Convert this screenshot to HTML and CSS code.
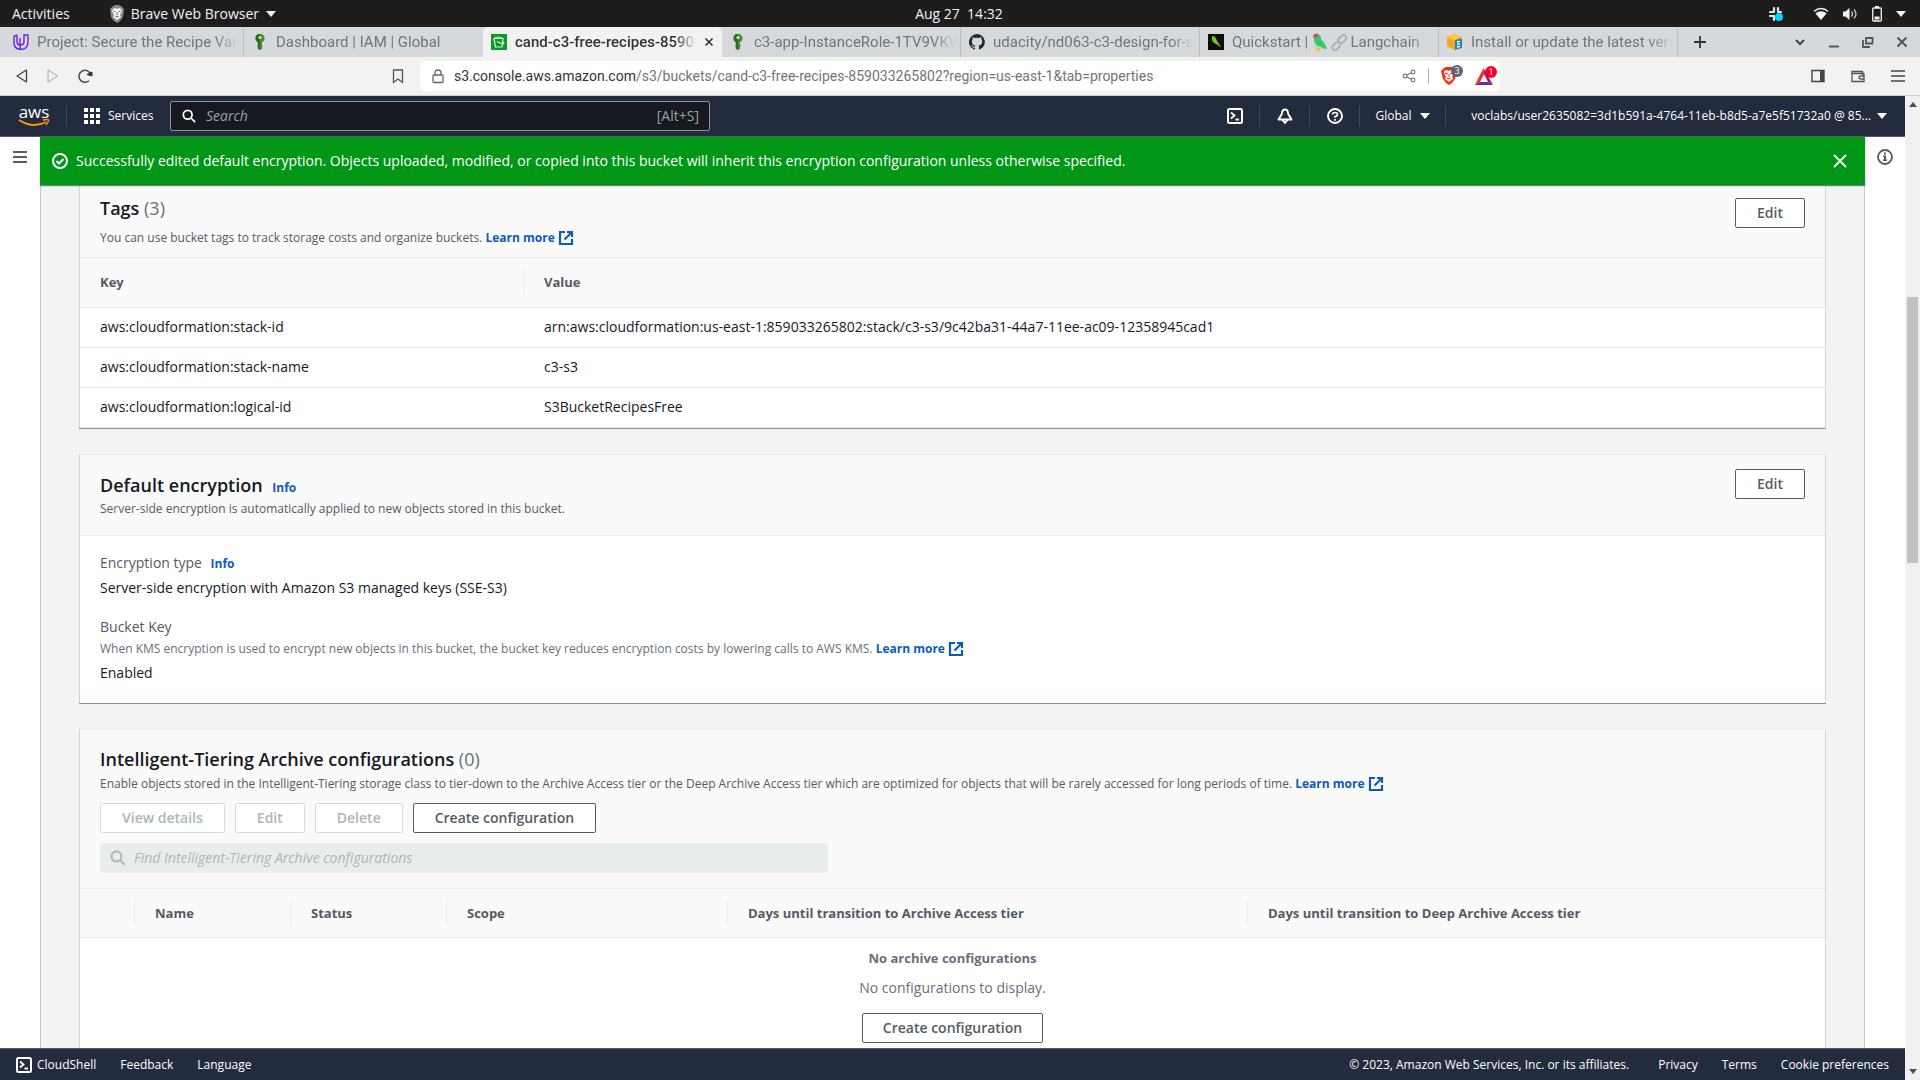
FILE: index.html
```html
<!DOCTYPE html>
<html lang="en">
<head>
<meta charset="utf-8">
<title>cand-c3-free-recipes-859033265802 - S3 bucket</title>
<link rel="stylesheet" href="styles.css">
</head>
<body>
<svg class="defs" aria-hidden="true">
  <symbol id="ext" viewBox="0 0 16 16"><path d="M7 2H2v12h12V9M9 2h5v5M14 2 6.500 9.500" fill="none" stroke="currentColor" stroke-width="2.200"/></symbol>
  <symbol id="search" viewBox="0 0 16 16"><circle cx="6.500" cy="6.500" r="5" fill="none" stroke="currentColor" stroke-width="2"/><path d="m10 10 5 5" stroke="currentColor" stroke-width="2"/></symbol>
  <symbol id="shell" viewBox="0 0 16 16"><rect x="1" y="1" width="14" height="14" rx="1.500" fill="none" stroke="currentColor" stroke-width="2"/><path d="m4 4.500 3.500 3L4 10.500M8.500 11.500H12" fill="none" stroke="currentColor" stroke-width="1.800"/></symbol>
  <symbol id="key" viewBox="0 0 16 16"><path d="M8 0C4.800 0 3.500 2 3.500 4.300c0 2 1 3.200 2.300 3.700v6.500L8 16l2-1.500V13l1-1-1-1V8c1.500-.5 2.600-1.700 2.600-3.700C12.600 2 11 0 8 0z" fill="#4b8a35"/><path d="M8 0C4.800 0 3.500 2 3.500 4.300c0 2 1 3.200 2.300 3.700v6.500L8 16z" fill="#2f6a22"/><circle cx="8" cy="3.500" r="1.500" fill="#d5e8cf"/></symbol>
</svg>

<header class="sysbar">
  <div class="sys-left"><span>Activities</span>
    <span class="sys-app"><svg width="14" height="18" viewBox="0 0 14 18"><path d="m3 1 2-1h4l2 1 3 3-1 8-3 4-3 2-3-2-3-4L0 4z" fill="#8a8a8a"/><path d="m3 4 2-1 2 1 2-1 2 1 1 2-2 4 1 2-4 3-4-3 1-2-2-4z" fill="#f4f4f4"/><path d="m3.500 6 2 .8M10.500 6l-2 .8M7 7v3m-2 1 2 1 2-1" stroke="#666" fill="none"/></svg>Brave Web Browser<i class="caret"></i></span>
  </div>
  <div>Aug 27&nbsp; 14:32</div>
  <div class="sys-right">
    <svg class="slack" width="16" height="16" viewBox="0 0 16 16"><path d="M6 2v3M2 6h4M10 2v4M10 6h3M2 10h3M6 10v4" stroke="#e5e5e5" stroke-width="2.200" stroke-linecap="round"/><circle cx="11" cy="11" r="4" fill="#00d1ff"/></svg>
    <svg width="16" height="14" viewBox="0 0 16 14"><path d="M1 4.500c4-4 10-4 14 0" stroke="#eee" fill="none" stroke-width="1.300"/><path d="M2.500 6.500c3.500-3 7.500-3 11 0L8 13z" fill="#f2f2f2"/></svg>
    <svg width="16" height="14" viewBox="0 0 16 14"><path d="M1 4.500h2.500L7.500 1v12l-4-3.500H1z" fill="#f2f2f2"/><path d="M9.500 4.500q2 2.500 0 5M12 2.500q4 4.500 0 9" stroke="#ccc" fill="none" stroke-width="1.300"/></svg>
    <svg width="12" height="16" viewBox="0 0 12 16"><path d="M4 0h4v2H4z" fill="#f2f2f2"/><rect x="1.700" y="2" width="8.600" height="13" rx="1" fill="none" stroke="#f2f2f2" stroke-width="1.300"/><path d="M3.500 10.500h5v3h-5z" fill="#f2f2f2"/></svg>
    <i class="caret"></i>
  </div>
</header>

<nav class="tabs" aria-label="Browser tabs">
  <a class="tab" href="#"><svg width="16" height="16" viewBox="0 0 16 16"><path d="M4 1v6.500q0 3.500 3.500 3.500T11 7.500V1l4-0v7q0 7-7 7.500Q1 15 1 9V2.500L4 1M7 4v11" fill="none" stroke="#6a1ff0" stroke-width="1.400"/></svg><span>Project: Secure the Recipe Vault</span></a>
  <a class="tab plain" href="#"><svg width="16" height="16"><use href="#key"/></svg><span>Dashboard | IAM | Global</span></a>
  <a class="tab active" href="#"><svg width="16" height="16" viewBox="0 0 16 16"><path fill="#0b9a2a" d="M0 0h16v16H0z"/><path d="M3 4.500h9l-1 8.500H4.500zM3 4.500Q7 1.500 12 4.500M6 7.500l6 2.500q2-.5 0-2" fill="none" stroke="#d8f5dc" stroke-width="1.200"/></svg><span>cand-c3-free-recipes-8590332</span><button class="x" type="button" aria-label="Close tab"><svg width="10" height="10" viewBox="0 0 10 10"><path d="m1.500 1.500 7 7m0-7-7 7" stroke="#333" stroke-width="1.600"/></svg></button></a>
  <a class="tab" href="#"><svg width="16" height="16"><use href="#key"/></svg><span>c3-app-InstanceRole-1TV9VKWX</span></a>
  <a class="tab" href="#"><svg width="16" height="16" viewBox="0 0 16 16"><path fill="#24292f" d="M8 0a8 8 0 0 0-2.500 15.600c.4.100.5-.2.500-.4v-1.500c-2.200.5-2.700-1-2.700-1-.4-.9-.9-1.200-.9-1.200-.7-.5.100-.5.100-.5.800.1 1.200.8 1.200.8.700 1.300 1.900.9 2.300.7.100-.5.300-.9.500-1.100-1.800-.2-3.600-.9-3.600-4 0-.9.300-1.600.8-2.100-.1-.2-.4-1 .1-2.100 0 0 .7-.2 2.200.8a7.500 7.500 0 0 1 4 0c1.500-1 2.200-.8 2.200-.8.400 1.100.2 1.900.1 2.100.5.600.8 1.300.8 2.100 0 3.100-1.900 3.800-3.700 4 .3.300.6.800.6 1.500v2.200c0 .2.100.5.600.4A8 8 0 0 0 8 0"/></svg><span>udacity/nd063-c3-design-for-se</span></a>
  <a class="tab" href="#"><svg width="16" height="16" viewBox="0 0 16 16"><path fill="#0a0f08" d="M0 0h16v16H0z"/><path d="M4 2q4 0 5 5l4 6-5-3Q3 8 4 2" fill="#76c82d"/><path d="m9 8 4 5-2-1z" fill="#e5592b"/></svg><span>Quickstart | <svg class="emoji" width="15" height="18" viewBox="0 0 15 18"><path d="M1 4q1-4 5-3 3 1 3 5 4 4 6 10-4 0-6-2-7-1-7-8z" fill="#35c96c"/><path d="M1 4Q2 0 6 1l-1 4z" fill="#ee4055"/><path d="m3 14 5 1v3H5z" fill="#f6c12b"/></svg> <svg class="emoji" width="16" height="18" viewBox="0 0 16 18"><g fill="none" stroke="#aab0b4" stroke-width="1.800"><rect x="-4.500" y="-2.500" width="9" height="5.500" rx="2.700" transform="translate(5 13) rotate(-45)"/><rect x="-4.500" y="-2.500" width="9" height="5.500" rx="2.700" transform="translate(11 6) rotate(-45)"/></g></svg> Langchain</span></a>
  <a class="tab" href="#"><svg width="16" height="16" viewBox="0 0 16 16"><path d="m0 3 7-3 8 3v9l-8 4-7-4z" fill="#f0a91c"/><path d="m0 3 7-3 8 3-8 3z" fill="#ffc83d"/><path d="m8 6 7-1.500V14l-7 2z" fill="#2586bd"/><path d="m10 8 3-.6M10 10.500l3-.6M10 13l3-.6" stroke="#fff" stroke-width="1.300"/></svg><span>Install or update the latest version</span></a>
  <button class="newtab" type="button" aria-label="New tab"><svg width="14" height="14" viewBox="0 0 14 14"><path d="M7 1v12M1 7h12" stroke="#333" stroke-width="1.800"/></svg></button>
  <div class="wincontrols">
    <button type="button" aria-label="Search tabs"><svg width="12" height="12" viewBox="0 0 12 12"><path d="m2 4 4 4 4-4" fill="none" stroke="#444" stroke-width="2"/></svg></button>
    <button type="button" aria-label="Minimize"><svg width="12" height="12" viewBox="0 0 12 12"><path d="M1 10.500h10" stroke="#555" stroke-width="2"/></svg></button>
    <button type="button" aria-label="Restore"><svg width="12" height="12" viewBox="0 0 12 12"><path d="M4 2h6.500v5.500H4zM1 4v7h7" fill="none" stroke="#555" stroke-width="1.800"/></svg></button>
    <button type="button" aria-label="Close window"><svg width="12" height="12" viewBox="0 0 12 12"><path d="m1.500 1.500 9 9m0-9-9 9" stroke="#555" stroke-width="2"/></svg></button>
  </div>
</nav>

<div class="toolbar">
  <div class="nav-left">
    <button type="button" aria-label="Back"><svg width="14" height="16" viewBox="0 0 14 16"><path d="M11.500 2v12L2 8z" fill="none" stroke="#444" stroke-width="1.300" stroke-linejoin="round"/></svg></button>
    <button type="button" aria-label="Forward"><svg width="14" height="16" viewBox="0 0 14 16"><path d="M2 2v12l9.500-6z" fill="none" stroke="#bbb" stroke-width="1.300" stroke-linejoin="round"/></svg></button>
    <button type="button" aria-label="Reload"><svg width="16" height="16" viewBox="0 0 16 16"><path d="M12 12.700A6 6 0 1 1 13.500 6" fill="none" stroke="#444" stroke-width="1.400"/><path d="M10 6.500 15 4v4z" fill="#333" stroke="#333"/></svg></button>
  </div>
  <button type="button" aria-label="Bookmark" class="bookmark"><svg width="12" height="15" viewBox="0 0 12 15"><path d="M1.500 1h9v12.500L6 10l-4.500 3.500z" fill="none" stroke="#555" stroke-width="1.300"/></svg></button>
  <div class="urlbox">
    <svg width="12" height="15" viewBox="0 0 12 15"><rect x="1" y="6" width="10" height="7.500" rx="1" fill="none" stroke="#666" stroke-width="1.300"/><path d="M3 6V4q0-3 3-3t3 3v2" fill="none" stroke="#666" stroke-width="1.300"/></svg>
    <div class="url"><b>s3.console.aws.amazon.com</b>/s3/buckets/cand-c3-free-recipes-859033265802?region=us-east-1&amp;tab=properties</div>
    <svg width="14" height="14" viewBox="0 0 14 14"><g fill="none" stroke="#777" stroke-width="1.100"><circle cx="3" cy="7" r="1.900"/><circle cx="11" cy="3" r="1.900"/><circle cx="11" cy="11" r="1.900"/><path d="m4.700 6.200 4.600-2.400m-4.600 4 4.600 2.400"/></g></svg>
    <i class="vsep"></i>
    <span class="badged"><svg width="16" height="18" viewBox="0 0 16 18"><path d="m3 1 2-1h6l2 1 3 3-2 8-3 4-3 2-3-2-3-4L0 4z" fill="#fb2a10"/><path d="m3 4 3-1 2 1 2-1 3 1 0 2-2 4 1 2-4 3-4-3 1-2-2-4z" fill="#fff"/><path d="m4 6 3 1M12 6 9 7M8 7v3m-2 1 2 1 2-1" stroke="#fb2a10" fill="none"/></svg><em>3</em></span>
    <span class="badged red"><svg width="18" height="17" viewBox="0 0 18 17"><path d="M8.500 0 0 17l5-3 4-8z" fill="#ff2a1a"/><path d="m0 17 5-3h8l5 3z" fill="#662d91"/><path d="m8.500 0 9.500 17-5-3-4-8z" fill="#a0108c"/></svg><em>1</em></span>
  </div>
  <div class="nav-right">
    <button type="button" aria-label="Sidebar"><svg width="14" height="14" viewBox="0 0 14 14"><path d="M1 1.500h12v11H1z" fill="none" stroke="#444" stroke-width="1.400"/><path d="M9 1h4v12H9z" fill="#444"/></svg></button>
    <button type="button" aria-label="Wallet"><svg width="14" height="14" viewBox="0 0 14 14"><path d="M1 2.500h10.500V5h1.500v7.500H1zM1 4.500h12M13 7H9.500Q8 7 8 8.500T9.500 10H13" fill="none" stroke="#555" stroke-width="1.300"/></svg></button>
    <button type="button" aria-label="Menu"><svg width="14" height="14" viewBox="0 0 14 14"><path d="M0 2h14M0 7h14M0 12h14" stroke="#444" stroke-width="1.300"/></svg></button>
  </div>
</div>

<div class="viewport">
<div class="page">
  <header class="aws">
    <a class="logo" href="#" aria-label="AWS"><span>aws</span><svg width="32" height="9" viewBox="0 0 32 9"><path d="M1 1q14 9 27 2" fill="none" stroke="#f90" stroke-width="1.900"/><path d="M25 1q5-1 5.500 0T28 6" fill="none" stroke="#f90" stroke-width="1.500"/></svg></a>
    <i class="hsep"></i>
    <button class="services" type="button"><svg width="16" height="16" viewBox="0 0 16 16" fill="#fff"><path d="M0 0h4v4H0zM6 0h4v4H6zM12 0h4v4h-4zM0 6h4v4H0zM6 6h4v4H6zM12 6h4v4h-4zM0 12h4v4H0zM6 12h4v4H6zM12 12h4v4h-4z"/></svg>Services</button>
    <label class="search"><svg width="14" height="14"><use href="#search"/></svg><input type="text" placeholder="Search" aria-label="Search"><span>[Alt+S]</span></label>
    <div class="aws-right">
      <button class="ic" type="button" aria-label="CloudShell"><svg width="16" height="16"><use href="#shell"/></svg></button>
      <button class="ic" type="button" aria-label="Notifications"><svg width="16" height="16" viewBox="0 0 16 16"><path d="M8 1.500c-2 0-3 2-3.200 4.500L1.500 11.500h13L11.200 6C11 3.500 10 1.500 8 1.500zM5.500 12l2.500 3 2.500-3" fill="none" stroke="#fff" stroke-width="1.900" stroke-linejoin="round"/></svg></button>
      <button class="ic" type="button" aria-label="Help"><svg width="16" height="16" viewBox="0 0 16 16"><circle cx="8" cy="8" r="7" fill="none" stroke="#fff" stroke-width="1.900"/><path d="M5.500 6.500Q5.500 4.500 8 4.500t2.500 2Q10.500 8 8 8.500v1.300M8 11v1.700" fill="none" stroke="#fff" stroke-width="1.700"/></svg></button>
      <button class="region" type="button">Global<i class="caret"></i></button>
      <button class="user" type="button">voclabs/user2635082=3d1b591a-4764-11eb-b8d5-a7e5f51732a0 @ 85...<i class="caret"></i></button>
    </div>
  </header>

  <div class="body">
    <aside class="rail"><button type="button" aria-label="Open navigation"><svg width="14" height="14" viewBox="0 0 14 14"><path d="M0 2h14M0 7h14M0 12h14" stroke="#545b64" stroke-width="2"/></svg></button></aside>
    <main>
      <div class="flash" role="status">
        <svg width="16" height="16" viewBox="0 0 16 16"><circle cx="8" cy="8" r="7" fill="none" stroke="#fff" stroke-width="2"/><path d="m4.500 8 2.500 2.500L11.500 6" fill="none" stroke="#fff" stroke-width="2"/></svg>
        <p>Successfully edited default encryption. Objects uploaded, modified, or copied into this bucket will inherit this encryption configuration unless otherwise specified.</p>
        <button type="button" aria-label="Dismiss"><svg width="14" height="14" viewBox="0 0 14 14"><path d="m1 1 12 12M13 1 1 13" stroke="#e8f5e9" stroke-width="2"/></svg></button>
      </div>

      <div class="cards">
      <section class="card first">
        <div class="card-head tags-head">
          <div><h2>Tags <span>(3)</span></h2>
          <p class="small">You can use bucket tags to track storage costs and organize buckets. <a href="#">Learn more <svg width="16" height="16"><use href="#ext"/></svg></a></p></div>
          <button class="btn" type="button">Edit</button>
        </div>
        <table class="tags">
          <thead><tr><th class="key"><div>Key</div></th><th><div>Value</div></th></tr></thead>
          <tbody>
            <tr><td>aws:cloudformation:stack-id</td><td>arn:aws:cloudformation:us-east-1:859033265802:stack/c3-s3/9c42ba31-44a7-11ee-ac09-12358945cad1</td></tr>
            <tr><td>aws:cloudformation:stack-name</td><td>c3-s3</td></tr>
            <tr><td>aws:cloudformation:logical-id</td><td>S3BucketRecipesFree</td></tr>
          </tbody>
        </table>
      </section>

      <section class="card">
        <div class="card-head enc-head">
          <div><h2>Default encryption <a class="info" href="#">Info</a></h2>
          <p class="small">Server-side encryption is automatically applied to new objects stored in this bucket.</p></div>
          <button class="btn" type="button">Edit</button>
        </div>
        <dl class="enc">
          <div><dt>Encryption type <a class="info" href="#">Info</a></dt><dd>Server-side encryption with Amazon S3 managed keys (SSE-S3)</dd></div>
          <div><dt>Bucket Key</dt><dd class="small hint">When KMS encryption is used to encrypt new objects in this bucket, the bucket key reduces encryption costs by lowering calls to AWS KMS. <a href="#">Learn more <svg width="16" height="16"><use href="#ext"/></svg></a></dd><dd>Enabled</dd></div>
        </dl>
      </section>

      <section class="card">
        <div class="card-head tier-head">
          <h2>Intelligent-Tiering Archive configurations <span>(0)</span></h2>
          <p class="small">Enable objects stored in the Intelligent-Tiering storage class to tier-down to the Archive Access tier or the Deep Archive Access tier which are optimized for objects that will be rarely accessed for long periods of time. <a href="#">Learn more <svg width="16" height="16"><use href="#ext"/></svg></a></p>
          <div class="actions">
            <button class="btn" type="button" disabled>View details</button>
            <button class="btn" type="button" disabled>Edit</button>
            <button class="btn" type="button" disabled>Delete</button>
            <button class="btn" type="button">Create configuration</button>
          </div>
          <label class="find"><svg width="16" height="16"><use href="#search"/></svg><input type="text" disabled placeholder="Find Intelligent-Tiering Archive configurations" aria-label="Find Intelligent-Tiering Archive configurations"></label>
        </div>
        <table class="tiers">
          <thead><tr><th class="c1"><div>&nbsp;</div></th><th class="c2"><div>Name</div></th><th class="c2"><div>Status</div></th><th class="c3"><div>Scope</div></th><th class="c4"><div>Days until transition to Archive Access tier</div></th><th><div>Days until transition to Deep Archive Access tier</div></th></tr></thead>
          <tbody><tr><td colspan="6" class="empty"><strong>No archive configurations</strong><p>No configurations to display.</p><button class="btn" type="button">Create configuration</button></td></tr></tbody>
        </table>
      </section>
      </div>
    </main>
    <aside class="rail right"><button type="button" aria-label="Info"><svg width="16" height="16" viewBox="0 0 16 16"><circle cx="8" cy="8" r="7" fill="none" stroke="#545b64" stroke-width="1.800"/><path d="M7 3.500h2v2H7zM6 6.500h3v4h1V12H6v-1.500h1V8H6z" fill="#545b64"/></svg></button></aside>
  </div>

  <footer>
    <a href="#" class="cs"><svg width="16" height="16"><use href="#shell"/></svg>CloudShell</a>
    <a href="#">Feedback</a>
    <a href="#">Language</a>
    <span class="copy">© 2023, Amazon Web Services, Inc. or its affiliates.</span>
    <a href="#">Privacy</a>
    <a href="#">Terms</a>
    <a href="#">Cookie preferences</a>
  </footer>
</div>
<div class="scroll" aria-hidden="true"><i class="up"></i><i class="gap-top"></i><i class="thumb"></i><i class="gap-bottom"></i><i class="down"></i></div>
</div>
</body>
</html>
```
FILE: styles.css
```css
*{box-sizing:border-box}
body{margin:0;height:100vh;display:flex;flex-direction:column;overflow:hidden;font:14px/22px "Open Sans","Noto Sans",sans-serif;color:#16191f;background:#fff}
.defs{position:absolute;width:0;height:0}
svg{flex:none;display:block}
button{font:inherit;color:inherit;background:none;border:0;padding:0;display:flex;align-items:center}
a{text-decoration:none;color:#0a5bc0}
h2,p,dl,dd{margin:0}
.caret{width:0;height:0;border:5px solid transparent;border-top:6px solid currentColor;border-bottom:0}

.sysbar{flex:none;height:27px;background:#1d1d1d;color:#f2f2f2;display:grid;grid-template-columns:1fr auto 1fr;align-items:center;padding:0 14px 0 12px}
.sys-left,.sys-right{display:flex;align-items:center}
.sys-left{gap:40px}
.sys-app{display:flex;align-items:center;gap:7px}
.sys-right{justify-content:flex-end;gap:13px}
.slack{margin-right:16px}

.tabs{flex:none;height:30px;background:#d5d9dc;display:flex;padding-left:5px;font:15px/20px Roboto,"Open Sans",sans-serif}
.tab{flex:0 1 239px;min-width:0;display:flex;align-items:center;gap:8px;padding:0 4px 0 8px;color:#70757a;border-right:1px solid #b9bec2}
.tab>span{flex:1;overflow:hidden;white-space:nowrap;-webkit-mask-image:linear-gradient(90deg,#000 88%,transparent);mask-image:linear-gradient(90deg,#000 88%,transparent)}
.tab.plain{border-color:transparent}
.tab.active{padding-right:7px;background:#f2f2f2;color:#333;border-color:transparent;border-radius:5px 5px 0 0;font-weight:500}
.emoji{display:inline-block;vertical-align:-4px}
.newtab{margin-left:15px}
.wincontrols{margin-left:auto;display:flex;gap:22px;padding-right:12px}

.toolbar{flex:none;height:39px;background:#f2f2f2;border-bottom:1px solid #cfcfcf;display:flex;align-items:center;padding:0 15px}
.nav-left{display:flex;gap:17px;width:377px}
.bookmark{margin-right:16px}
.urlbox{flex:0 1 1080px;min-width:0;height:30px;background:#fff;border-radius:5px;display:flex;align-items:center;padding:0 10px 0 12px}
.url{flex:1;min-width:0;margin-left:10px;font:14px/20px Roboto,"Open Sans",sans-serif;color:#70757a;white-space:nowrap;overflow:hidden}
.url b{font-weight:400;color:#333}
.vsep{width:1px;height:16px;background:#b5b5b5;margin:0 12px}
.badged{position:relative;width:34px}
.badged.red{width:15px}
.badged em{position:absolute;left:10px;top:-2px;width:12px;height:12px;border-radius:6px;background:#5e6175;color:#fff;font:9px/12px "Open Sans",sans-serif;text-align:center}
.badged.red em{background:#fb0024}
.nav-right{margin-left:auto;display:flex;gap:26px}

.viewport{flex:1;min-height:0;display:flex}
.page{flex:1;min-width:0;display:flex;flex-direction:column}
.scroll{flex:none;width:15px;background:#f0f0f0;display:flex;flex-direction:column;align-items:center;padding:6px 0}
.scroll .up{border:4px solid transparent;border-bottom:5px solid #505050;border-top:0}
.scroll .down{border:4px solid transparent;border-top:5px solid #505050;border-bottom:0}
.gap-top{flex:190}
.thumb{flex:266;width:11px;background:#c1c1c1}
.gap-bottom{flex:506}

.aws{flex:none;height:41px;background:#232b3e;border-bottom:1px solid #545b64;color:#fff;display:flex;align-items:center;font-size:12px;padding-left:18px}
.logo{color:#fff;width:32px;font-size:17px;line-height:14px}
.logo span{display:block;text-align:center}
.hsep{width:1px;height:22px;background:#414a59;margin:0 17px 0 16px}
.services{gap:8px;width:86px}
.search{flex:0 1 540px;min-width:0;height:30px;background:#16191f;border:1px solid #879596;border-radius:2px;display:flex;align-items:center;gap:10px;padding:0 10px 0 11px;font-size:14px;color:#95a5a6}
.search svg{color:#fff}
input{flex:1;min-width:0;border:0;background:none;font:inherit;padding:0}
input::placeholder{font-style:italic;color:#95a5a6;opacity:1}
.aws-right{margin-left:auto;display:flex}
.ic,.region{border-right:1px solid #414a59;height:22px;justify-content:center}
.ic{width:50px}
.ic:first-child{border-color:#414a59}
.region{width:86px;gap:8px}
.user{width:459px;justify-content:flex-end;padding-right:18px;gap:6px}

.body{flex:1;min-height:0;display:flex;overflow:hidden}
.rail{flex:none;width:40px;padding:13px;height:100%}
.right{padding:12px}
main{flex:1;min-width:0;background:#f2f4f3;border:solid #c6cacb;border-width:0 1px;display:flex;flex-direction:column}
.flash{flex:none;position:relative;height:48px;margin:0 -1px;background:#009616;color:#fff;display:flex;align-items:center;gap:8px;padding:0 18px 0 12px;box-shadow:0 1px 1px #6e7f78}
.flash p{flex:1}
.cards{flex:1;min-height:0;padding:0 38px;display:flex;flex-direction:column;gap:26px}
.card{flex:none;background:#fff;border:solid #d0d4d5;border-width:1px 1px 0;border-top-color:#eaeded;box-shadow:0 1px 0 #879596}
.first{border-top:0}
.card-head{background:#fafafa;padding:0 20px;border-bottom:1px solid #eaeded}
.tags-head,.enc-head{display:flex;justify-content:space-between;align-items:flex-start}
.tags-head{height:73px;padding-top:13px}
.tags-head h2{line-height:20px;margin-bottom:10px}
.enc-head{height:81px;padding-top:14px}
.enc-head>div{padding-top:5px}
h2{font-size:18px;line-height:22px;font-weight:600}
h2 span{font-weight:400;color:#687078}
.small{font-size:12px;line-height:20px;color:#545b64}
.small a,.info{font-weight:700;font-size:12px}
.info{margin-left:5px}
.small svg{display:inline-block;vertical-align:-4px}
.btn{height:30px;padding:0 20px;border:1px solid #545b64;border-radius:2px;background:#fff;color:#545b64;font-weight:600;white-space:nowrap}
.card-head .btn{padding:0 21px}
.btn:disabled{color:#aab7b8;border-color:#d5dbdb}

table{width:100%;border-collapse:collapse;table-layout:fixed}
th{height:49px;padding:0;background:#fafafa;border-bottom:1px solid #eaeded;text-align:left;font-size:13px;color:#545b64}
th div{border-right:1px solid #eaeded;padding-left:20px;line-height:24px}
th:last-child div{border:0}
.key{width:444px}
.tags td{height:40px;padding:0 20px;border-bottom:1px solid #eaeded}
.c1{width:55px}
.c2{width:156px}
.c3{width:281px}
.c4{width:520px}

.enc{padding:16px 20px 17px;display:flex;flex-direction:column;gap:15px}
.enc dt{color:#545b64;line-height:22px}
.enc dd{line-height:26px}
.enc .hint{line-height:22px;color:#687078}
.tier-head{padding-top:18px;padding-bottom:15px}
.tier-head .small{line-height:24px;margin-top:2px}
.actions{display:flex;gap:10px;margin:7px 0 10px}
.find{width:728px;max-width:100%;height:30px;background:#e9eded;border-radius:2px;display:flex;align-items:center;gap:8px;padding:0 10px;color:#aab7b8}
.find input::placeholder{color:#aab7b8}
.empty{padding:9px 0 20px;text-align:center;color:#687078}
.empty strong{font-size:13px}
.empty p{margin:8px 0 14px}
.empty .btn{margin:0 auto}

footer{flex:none;height:32px;background:#232b3e;border-top:1px solid #545b64;color:#fff;font-size:12px;display:flex;align-items:center;gap:24px;padding:0 16px;white-space:nowrap}
footer a{color:#fff}
.cs{display:flex;align-items:center;gap:5px}
.copy{margin-left:auto;margin-right:5px}
```
